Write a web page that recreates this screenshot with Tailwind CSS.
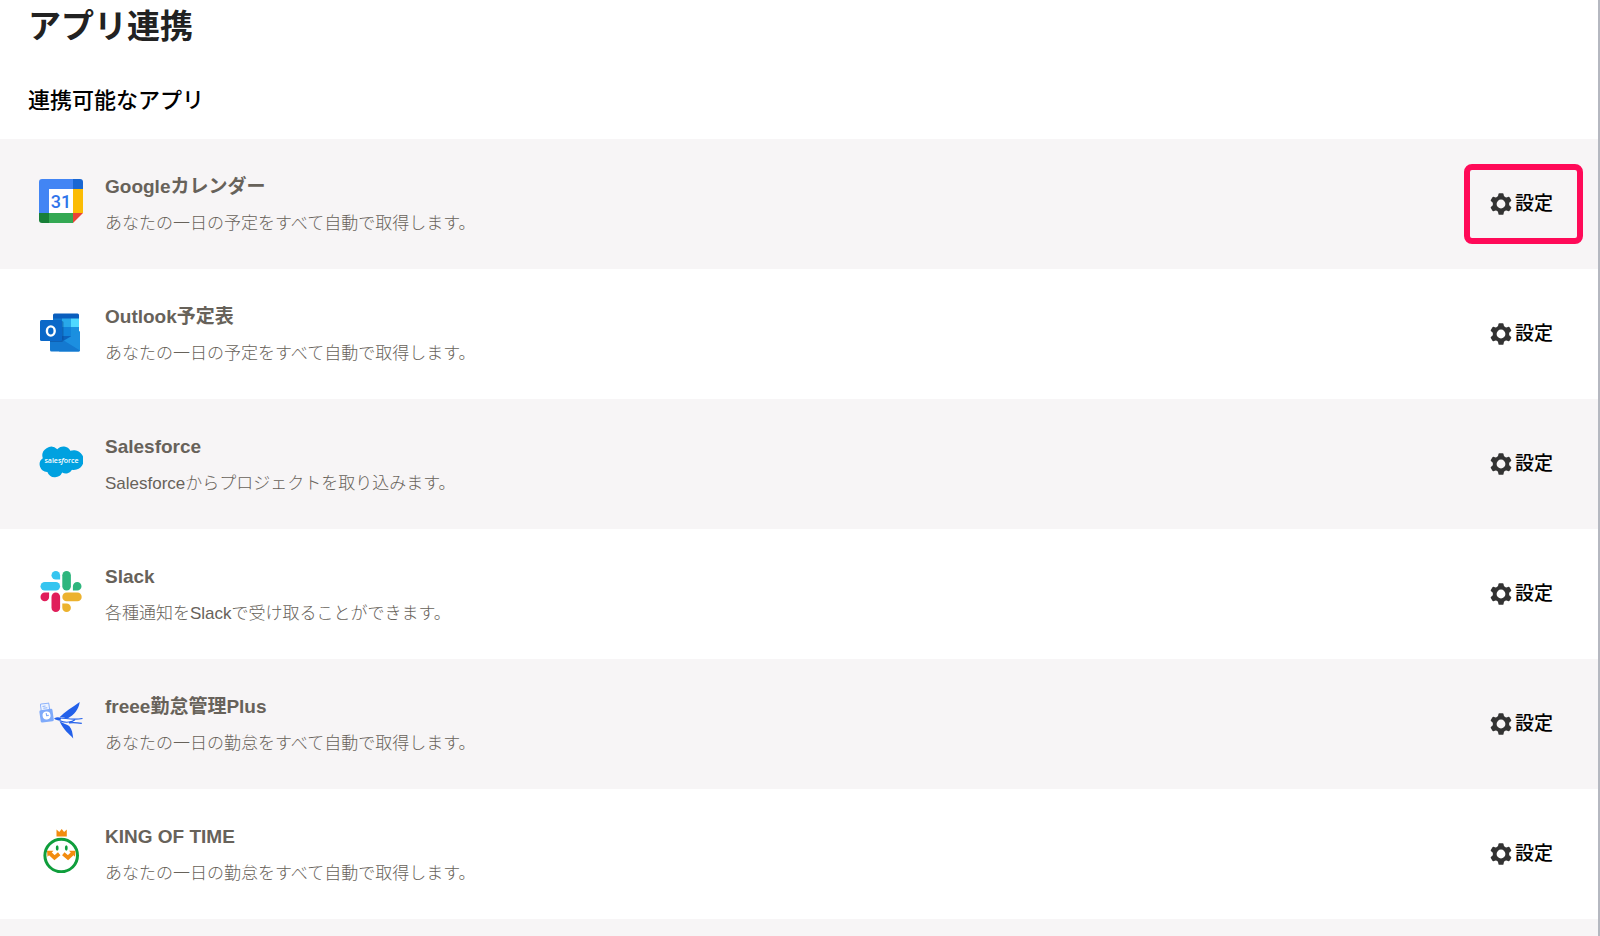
<!DOCTYPE html>
<html lang="ja">
<head>
  <meta charset="utf-8">
  <meta name="viewport" content="width=device-width, initial-scale=1">
  <title>アプリ連携</title>
  <script src="https://cdn.jsdelivr.net/npm/@tailwindcss/browser@4"></script>
</head>
<body class="min-h-screen flex flex-col bg-white border-r-2 border-[#b5b8c0] font-['Liberation_Sans','Noto_Sans_CJK_JP',sans-serif] text-[#67625a]">
<svg class="hidden">
  <symbol id="gear" viewBox="0 0 24 24">
    <circle cx="12" cy="12" r="6.9" fill="none" stroke="currentColor" stroke-width="4.2"/>
    <g fill="currentColor">
      <path id="tooth" d="M8.400 5 9.300.900Q9.500.200 10.200.200h3.600q.700 0 .900.700L15.600 5z"/>
      <use href="#tooth" transform="rotate(60 12 12)"/>
      <use href="#tooth" transform="rotate(120 12 12)"/>
      <use href="#tooth" transform="rotate(180 12 12)"/>
      <use href="#tooth" transform="rotate(240 12 12)"/>
      <use href="#tooth" transform="rotate(300 12 12)"/>
    </g>
  </symbol>
</svg>
<main class="flex-1 flex flex-col">
  <header class="pl-7 pt-0.5 pb-[22px]">
    <h1 class="text-[33px] leading-[50px] font-bold text-[#222]">アプリ連携</h1>
    <h2 class="mt-[33px] text-[22px] leading-8 font-medium text-black">連携可能なアプリ</h2>
  </header>
  <ul class="flex-1 flex flex-col">
    <li class="flex items-center h-[130px] pl-[39px] pr-[15px] odd:bg-[#f7f5f6]">
      <svg class="size-11 self-start mt-10 shrink-0" viewBox="0 0 44 44">
        <path d="M10 10h24v24H10z" fill="#fff"/>
        <path d="M3 0h31v10H10v24H0V3a3 3 0 0 1 3-3z" fill="#4285f4"/>
        <path d="M34 0h7a3 3 0 0 1 3 3v7H34z" fill="#1967d2"/>
        <path d="M34 10h10v24H34z" fill="#fbbc04"/>
        <path d="M10 34h24v10H10z" fill="#34a853"/>
        <path d="M0 34h10v10H3a3 3 0 0 1-3-3z" fill="#188038"/>
        <path d="M34 34h10L34 44z" fill="#ea4335"/>
        <text x="22" y="28.500" text-anchor="middle" class="font-['Roboto',sans-serif] text-[18px] font-medium" fill="#2f74ea">31</text>
      </svg>
      <div class="flex-1 ml-[22px]">
        <h3 class="text-[19px] leading-7 font-bold">Googleカレンダー</h3>
        <p class="mt-[11px] text-[17px] leading-6 font-light">あなたの一日の予定をすべて自動で取得します。</p>
      </div>
      <button type="button" class="flex items-center gap-[3px] h-20 pl-5 pr-6 border-6 border-[#ff0a58] rounded-lg text-[19px] font-medium text-black"><svg class="w-[22px] h-6 text-[#333]"><use href="#gear"/></svg>設定</button>
    </li>
    <li class="flex items-center h-[130px] pl-[39px] pr-[15px] odd:bg-[#f7f5f6]">
      <svg class="size-11 self-start mt-10 shrink-0" viewBox="0 0 44 44">
        <path d="M14 6a1.500 1.500 0 0 1 1.500-1.500h23A1.500 1.500 0 0 1 40 6v4H14z" fill="#0a5ebd"/>
        <path d="M14 9.500h9V18h-9z" fill="#1178d0"/>
        <path d="M23 9.500h9V18h-9z" fill="#28a8ea"/>
        <path d="M32 9.500h8V18h-8z" fill="#50d9ff"/>
        <path d="M14 18h9v14h-9z" fill="#0a5cba"/>
        <path d="M23 18h9v14h-9z" fill="#1283da"/>
        <path d="M32 18h8v10h-8z" fill="#1a90df"/>
        <path d="M23 27h9v6h-9z" fill="#0c62bd"/>
        <path d="M41 22v19a1.500 1.500 0 0 1-1.500 1.500H20L25 31.500z" fill="#1c8fe0"/>
        <path d="M11 23l30 18.500a1.500 1.500 0 0 1-1.500 1H12.500A1.500 1.500 0 0 1 11 41z" fill="#1479d0"/>
        <path d="M21 12h2a1.500 1.500 0 0 1 1.500 1.500V31a2 2 0 0 1-2 2H11v-2h10z" fill="#0a4a96" opacity=".5"/>
        <rect x="1" y="11" width="22" height="21" rx="1.500" fill="#0b68c8"/>
        <ellipse cx="11.800" cy="22" rx="3.900" ry="4.600" fill="none" stroke="#fff" stroke-width="2.400"/>
      </svg>
      <div class="flex-1 ml-[22px]">
        <h3 class="text-[19px] leading-7 font-bold">Outlook予定表</h3>
        <p class="mt-[11px] text-[17px] leading-6 font-light">あなたの一日の予定をすべて自動で取得します。</p>
      </div>
      <button type="button" class="flex items-center gap-[3px] h-20 pl-5 pr-6 border-6 border-transparent rounded-lg text-[19px] font-medium text-black"><svg class="w-[22px] h-6 text-[#333]"><use href="#gear"/></svg>設定</button>
    </li>
    <li class="flex items-center h-[130px] pl-[39px] pr-[15px] odd:bg-[#f7f5f6]">
      <svg class="size-11 self-start mt-10 shrink-0" viewBox="0 0 44 44">
        <path d="M18.300 10.300a7.700 7.700 0 0 1 13 1.500A9.900 9.900 0 1 1 33 30.800a7 7 0 0 1-9.800 2.800 8 8 0 0 1-14.800-.7A7.500 7.500 0 0 1 3.800 19.300 8.800 8.800 0 0 1 18.300 10.300z" fill="#00a1e0"/>
        <text x="22.500" y="23.500" text-anchor="middle" class="font-['Open_Sans',sans-serif] text-[7px] font-semibold" fill="#fff">sales<tspan font-style="italic">f</tspan>orce</text>
      </svg>
      <div class="flex-1 ml-[22px]">
        <h3 class="text-[19px] leading-7 font-bold">Salesforce</h3>
        <p class="mt-[11px] text-[17px] leading-6 font-light">Salesforceからプロジェクトを取り込みます。</p>
      </div>
      <button type="button" class="flex items-center gap-[3px] h-20 pl-5 pr-6 border-6 border-transparent rounded-lg text-[19px] font-medium text-black"><svg class="w-[22px] h-6 text-[#333]"><use href="#gear"/></svg>設定</button>
    </li>
    <li class="flex items-center h-[130px] pl-[39px] pr-[15px] odd:bg-[#f7f5f6]">
      <svg class="size-11 self-start mt-10 shrink-0" viewBox="0 0 44 44">
        <g fill="#36c5f0">
          <path d="M16.800 2a4.300 4.300 0 1 0 0 8.600h4.300V6.300A4.300 4.300 0 0 0 16.800 2z"/>
          <rect x="1.500" y="13" width="19.600" height="8.600" rx="4.300"/>
        </g>
        <g fill="#2eb67d">
          <rect x="23.300" y="2" width="8.600" height="19.600" rx="4.300"/>
          <path d="M42.500 17.300a4.300 4.300 0 1 0-8.600 0v4.300h4.300a4.300 4.300 0 0 0 4.300-4.300z"/>
        </g>
        <g fill="#ecb22e">
          <rect x="23.300" y="23.600" width="19.400" height="8.600" rx="4.300"/>
          <path d="M27.600 43a4.300 4.300 0 1 0 0-8.600h-4.300v4.300a4.300 4.300 0 0 0 4.300 4.300z"/>
        </g>
        <g fill="#e01e5a">
          <path d="M1.500 27.900a4.300 4.300 0 1 0 8.600 0v-4.300H5.800a4.300 4.300 0 0 0-4.300 4.300z"/>
          <rect x="12.500" y="23.600" width="8.600" height="19.400" rx="4.300"/>
        </g>
      </svg>
      <div class="flex-1 ml-[22px]">
        <h3 class="text-[19px] leading-7 font-bold">Slack</h3>
        <p class="mt-[11px] text-[17px] leading-6 font-light">各種通知をSlackで受け取ることができます。</p>
      </div>
      <button type="button" class="flex items-center gap-[3px] h-20 pl-5 pr-6 border-6 border-transparent rounded-lg text-[19px] font-medium text-black"><svg class="w-[22px] h-6 text-[#333]"><use href="#gear"/></svg>設定</button>
    </li>
    <li class="flex items-center h-[130px] pl-[39px] pr-[15px] odd:bg-[#f7f5f6]">
      <svg class="size-11 self-start mt-10 shrink-0" viewBox="0 0 44 44">
        <g transform="rotate(-8 7 14)">
          <rect x="2.600" y="4.500" width="8.500" height="8" rx=".8" fill="#eef4ff" stroke="#8fb4fb" stroke-width="1"/>
          <path d="M4.500 7h3M5 9h4" stroke="#8fb4fb" stroke-width="1"/>
          <rect x=".6" y="10.500" width="13.200" height="12.500" rx="1.500" fill="#7faafa"/>
          <circle cx="7.200" cy="16.500" r="4" fill="#fff"/>
          <path d="M7.200 14v2.700h2.200" fill="none" stroke="#7faafa" stroke-width="1.100"/>
        </g>
        <path d="M19 21c7-2 13-2 20 1.500-6 2-14 3-20-1.500z" fill="#fff"/>
        <g fill="#2360ea">
          <path d="M20.500 18.300C26 12.500 33 8.500 40.700 3c-1 7.500-5.500 13-12.200 16.400-3-.6-5-1-8-1.100z"/>
          <path d="M20.500 22c3 2.500 7 3 9.700 5 3 3.300 3.400 7.500 4 12.500-3.500-4.500-9.700-8-13.700-17.500z"/>
          <path d="M15 19.500c2.500-1.600 5-1.500 7-.4l-.6 2.700c-2.500-.2-4.800-.9-6.400-2.300z"/>
        </g>
        <g fill="none" stroke="#2360ea" stroke-width="1.100">
          <path d="M21 19c7 .3 12 2.200 22.500.5"/>
          <path d="M21 21.700c6 2.700 12 1.300 15-1 M30 24c4-.8 8-.3 12.800.4"/>
        </g>
      </svg>
      <div class="flex-1 ml-[22px]">
        <h3 class="text-[19px] leading-7 font-bold">freee勤怠管理Plus</h3>
        <p class="mt-[11px] text-[17px] leading-6 font-light">あなたの一日の勤怠をすべて自動で取得します。</p>
      </div>
      <button type="button" class="flex items-center gap-[3px] h-20 pl-5 pr-6 border-6 border-transparent rounded-lg text-[19px] font-medium text-black"><svg class="w-[22px] h-6 text-[#333]"><use href="#gear"/></svg>設定</button>
    </li>
    <li class="flex items-center h-[130px] pl-[39px] pr-[15px] odd:bg-[#f7f5f6]">
      <svg class="size-11 self-start mt-10 shrink-0" viewBox="0 0 44 44">
        <path d="M17.500.5l2.800 2.500L22.700 0l2.400 3L27.800.5V7.500H17.500z" fill="#f28c0f"/>
        <circle cx="22.200" cy="26.500" r="16.300" fill="#fff" stroke="#0f9e3c" stroke-width="3"/>
        <ellipse cx="18.200" cy="19" rx="1.400" ry="2.700" fill="#0f9e3c"/>
        <ellipse cx="27.300" cy="19" rx="1.400" ry="2.700" fill="#0f9e3c"/>
        <g fill="none" stroke="#f28c0f" stroke-width="3.800">
          <path d="M10.500 24l5 4.700 4.700-3.900"/>
          <path d="M24.300 24.800l4.700 3.900 5-4.700"/>
        </g>
        <path d="M8 21.800h6.500l-6 6zM36.500 21.800H30l6 6z" fill="#f28c0f"/>
      </svg>
      <div class="flex-1 ml-[22px]">
        <h3 class="text-[19px] leading-7 font-bold">KING OF TIME</h3>
        <p class="mt-[11px] text-[17px] leading-6 font-light">あなたの一日の勤怠をすべて自動で取得します。</p>
      </div>
      <button type="button" class="flex items-center gap-[3px] h-20 pl-5 pr-6 border-6 border-transparent rounded-lg text-[19px] font-medium text-black"><svg class="w-[22px] h-6 text-[#333]"><use href="#gear"/></svg>設定</button>
    </li>
    <li class="flex-1 odd:bg-[#f7f5f6]"></li>
  </ul>
</main>
</body>
</html>
